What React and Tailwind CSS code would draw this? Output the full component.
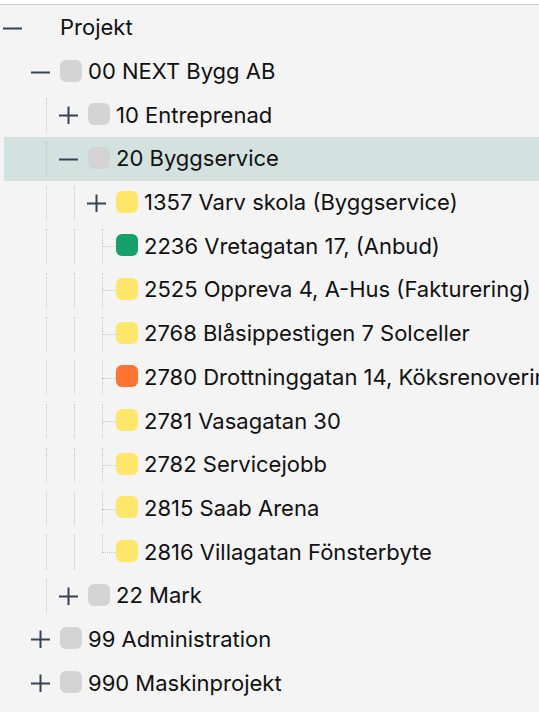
import React from "react";

const COLORS = {
  gray: "bg-[#d4d4d4]",
  yellow: "bg-[#fee66a]",
  green: "bg-[#17a06b]",
  orange: "bg-[#fb7431]",
};

const rows = [
  { level: 0, toggle: "minus", label: "Projekt", box: null },
  { level: 1, toggle: "minus", label: "00 NEXT Bygg AB", box: "gray" },
  { level: 2, toggle: "plus", label: "10 Entreprenad", box: "gray" },
  { level: 2, toggle: "minus", label: "20 Byggservice", box: "gray", selected: true },
  { level: 3, toggle: "plus", label: "1357 Varv skola (Byggservice)", box: "yellow" },
  { level: 3, leaf: "mid", label: "2236 Vretagatan 17, (Anbud)", box: "green" },
  { level: 3, leaf: "mid", label: "2525 Oppreva 4, A-Hus (Fakturering)", box: "yellow" },
  { level: 3, leaf: "mid", label: "2768 Blåsippestigen 7 Solceller", box: "yellow" },
  { level: 3, leaf: "mid", label: "2780 Drottninggatan 14, Köksrenovering", box: "orange" },
  { level: 3, leaf: "mid", label: "2781 Vasagatan 30", box: "yellow" },
  { level: 3, leaf: "mid", label: "2782 Servicejobb", box: "yellow" },
  { level: 3, leaf: "mid", label: "2815 Saab Arena", box: "yellow" },
  { level: 3, leaf: "last", label: "2816 Villagatan Fönsterbyte", box: "yellow" },
  { level: 2, toggle: "plus", label: "22 Mark", box: "gray" },
  { level: 1, toggle: "plus", label: "99 Administration", box: "gray" },
  { level: 1, toggle: "plus", label: "990 Maskinprojekt", box: "gray" },
];

function Toggle({ type }) {
  return (
    <svg width="20" height="20" viewBox="0 0 20 20" className="-ml-[1px] text-[#344256]">
      <path d="M0 10.5H19" stroke="currentColor" strokeWidth="2" />
      {type === "plus" && <path d="M9.5 1.5V19" stroke="currentColor" strokeWidth="2" />}
    </svg>
  );
}

function Guide() {
  return (
    <div className="w-[28px] h-full flex justify-center py-[5px] shrink-0">
      <div className="h-full border-l border-dotted border-[#c4c4c4]" />
    </div>
  );
}

function Connector({ last }) {
  return (
    <div className="w-[28px] h-full relative shrink-0">
      <div
        className={
          "absolute left-[14px] top-[5px] border-l border-dotted border-[#c4c4c4] " +
          (last ? "h-[17px]" : "bottom-[5px]")
        }
      />
      <div className="absolute left-[14px] right-0 top-[22px] border-t border-dotted border-[#c4c4c4]" />
    </div>
  );
}

function Label({ children }) {
  return (
    <div className="flex items-center whitespace-nowrap text-[22px] text-[#111] leading-none pb-[1px]">
      {children}
    </div>
  );
}

function Box({ color }) {
  return (
    <div className="w-[28px] shrink-0 flex items-center">
      <div className={"w-[22px] h-[22px] rounded-[6px] -mt-[2px] " + (color ? COLORS[color] : "")} />
    </div>
  );
}

function Row({ row }) {
  const cols = [];
  for (let k = 0; k < row.level; k++) {
    if (k === 0) cols.push(<div key={k} className="w-[28px] shrink-0" />);
    else cols.push(<Guide key={k} />);
  }
  return (
    <div className="h-[43.7px] pl-[4px]">
      <div className={"h-full flex items-stretch " + (row.selected ? "bg-[#d3e2df]" : "")}>
        {cols}
        <div className="w-[28px] shrink-0 flex items-center">
          <Toggle type={row.toggle} />
        </div>
        <Box color={row.box} />
        <Label>{row.label}</Label>
      </div>
    </div>
  );
}

function LeafRow({ row }) {
  return (
    <div className="h-[43.7px] pl-[4px]">
      <div className="h-full flex items-stretch">
        <div className="w-[28px] shrink-0" />
        <Guide />
        <Guide />
        <Connector last={row.leaf === "last"} />
        <Box color={row.box} />
        <Label>{row.label}</Label>
      </div>
    </div>
  );
}

export default function App() {
  return (
    <div className="min-h-screen bg-white pt-[4px] overflow-hidden" style={{ fontFamily: "Inter, 'Noto Sans', sans-serif" }}>
      <div className="border-t border-[#cfcfcf] bg-[#f4f4f4] min-h-[708px] pt-[1px]">
        {rows.map((r, i) =>
          r.leaf ? <LeafRow key={i} row={r} /> : <Row key={i} row={r} />
        )}
      </div>
    </div>
  );
}
